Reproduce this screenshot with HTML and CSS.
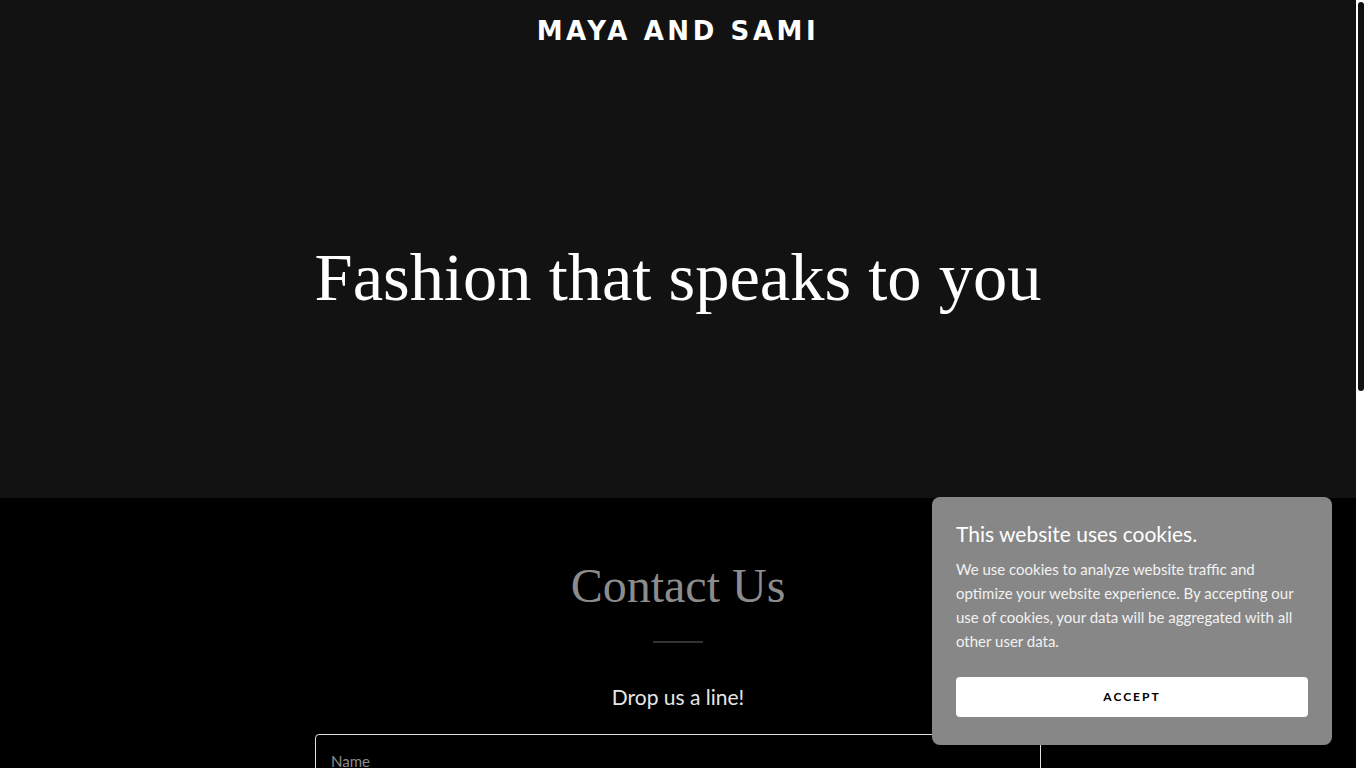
FILE: index.html
```html
<!DOCTYPE html>
<html lang="en">
<head>
<meta charset="utf-8">
<title>Maya and Sami</title>
<link rel="stylesheet" href="styles.css">
</head>
<body>
<div class="page">
  <header class="hero">
    <div class="brand">MAYA AND SAMI</div>
    <h1 class="hero-title">Fashion that speaks to you</h1>
  </header>
  <main class="contact">
    <h2 class="contact-title">Contact Us</h2>
    <hr class="divider">
    <p class="contact-sub">Drop us a line!</p>
    <form class="form">
      <div class="field"><span class="placeholder">Name</span></div>
      <div class="field"><span class="placeholder">Email*</span></div>
      <div class="field tall"><span class="placeholder">Message</span></div>
      <div class="send">SEND</div>
    </form>
  </main>
  <footer class="footer">Copyright © 2024 Maya and Sami - All Rights Reserved.</footer>
</div>
<div class="scrollbar"><div class="thumb"></div></div>
<aside class="cookie">
  <div class="cookie-title">This website uses cookies.</div>
  <p class="cookie-text">We use cookies to analyze website traffic and optimize your website experience. By accepting our use of cookies, your data will be aggregated with all other user data.</p>
  <div class="cookie-btn">ACCEPT</div>
</aside>
</body>
</html>
```
FILE: styles.css
```css
html { scrollbar-width: none; }
html::-webkit-scrollbar { display: none; }

body {
  margin: 0;
  background: #000;
  font-family: "Lato", "Liberation Sans", sans-serif;
  color: #fff;
}

.page {
  margin-right: 10px;
}

.scrollbar {
  position: fixed;
  top: 0;
  right: 0;
  width: 10px;
  height: 100vh;
  background: #fff;
  padding: 2px;
  box-sizing: border-box;
}
.thumb {
  width: 6px;
  height: 389px;
  background: #111;
  border-radius: 3px;
}

.hero {
  background: #121212;
  height: 498px;
  display: flex;
  flex-direction: column;
  align-items: center;
}

.brand {
  font-family: "DejaVu Sans", sans-serif;
  font-weight: 700;
  font-size: 26px;
  letter-spacing: 3.6px;
  margin-top: 14px;
  line-height: 34px;
}

.hero-title {
  font-family: "Liberation Serif", serif;
  font-weight: 400;
  font-size: 68.5px;
  line-height: 86px;
  margin: 186px 0 0;
}

.contact {
  width: 726px;
  margin: 0 auto;
  padding-top: 56px;
  display: flex;
  flex-direction: column;
  align-items: center;
}

.contact-title {
  font-family: "Liberation Serif", serif;
  font-weight: 400;
  font-size: 48px;
  line-height: 64px;
  color: #8c8c8c;
  margin: 0;
}

.divider {
  width: 50px;
  border: 0;
  border-top: 2px solid #333;
  margin: 23px 0 0;
}

.contact-sub {
  font-size: 21px;
  line-height: 30px;
  color: #e6e6e6;
  margin: 39px 0 0;
}

.form {
  width: 100%;
  margin-top: 22px;
  display: flex;
  flex-direction: column;
  gap: 24px;
}

.field {
  border: 1px solid #e0e0e0;
  border-radius: 4px;
  height: 56px;
  padding: 16px 15px 0;
  box-sizing: border-box;
}
.field.tall { height: 160px; }

.placeholder {
  font-size: 15px;
  color: #8c8c8c;
}

.send {
  background: #fff;
  color: #000;
  text-align: center;
  font-weight: 700;
  font-size: 13px;
  letter-spacing: 2px;
  padding: 16px 0;
  border-radius: 4px;
}

.footer {
  margin-top: 200px;
  padding: 60px 0 140px;
  text-align: center;
  font-size: 15px;
  color: #aaa;
}

.cookie {
  position: fixed;
  right: 34px;
  bottom: 23px;
  width: 400px;
  box-sizing: border-box;
  background: #878787;
  border-radius: 8px;
  padding: 22px 24px 28px;
}

.cookie-title {
  font-size: 21px;
  line-height: 30px;
  color: #fff;
}

.cookie-text {
  font-size: 15px;
  line-height: 24px;
  color: #f2f2f2;
  margin: 8px 0 24px;
}

.cookie-btn {
  background: #fff;
  color: #000;
  border-radius: 4px;
  height: 40px;
  line-height: 40px;
  text-align: center;
  font-weight: 700;
  font-size: 12px;
  letter-spacing: 2px;
}
```
